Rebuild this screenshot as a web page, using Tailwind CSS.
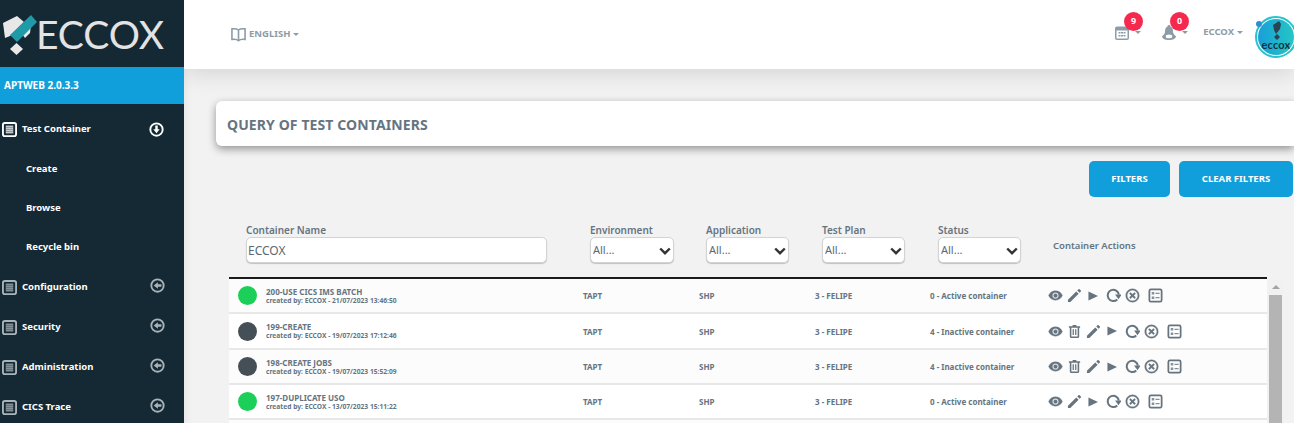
<!DOCTYPE html>
<html lang="en">
<head>
<meta charset="utf-8">
<title>ECCOX</title>
<script src="https://cdn.jsdelivr.net/npm/@tailwindcss/browser@4"></script>
</head>
<body class="w-[1294px] h-[423px] overflow-hidden bg-[#f2f2f2] font-['Noto_Sans',sans-serif]">
<svg class="hidden" xmlns="http://www.w3.org/2000/svg">
  <defs>
    <symbol id="eye" viewBox="0 0 24 24"><path fill="currentColor" stroke="currentColor" stroke-width=".6" d="M12,9A3,3 0 0,0 9,12A3,3 0 0,0 12,15A3,3 0 0,0 15,12A3,3 0 0,0 12,9M12,17A5,5 0 0,1 7,12A5,5 0 0,1 12,7A5,5 0 0,1 17,12A5,5 0 0,1 12,17M12,4.5C7,4.5 2.73,7.61 1,12C2.73,16.39 7,19.5 12,19.5C17,19.5 21.27,16.39 23,12C21.27,7.61 17,4.5 12,4.5Z"/></symbol>
    <symbol id="pencil" viewBox="0 0 24 24"><path fill="currentColor" d="M22.2,5.6C22.7,5.1 22.7,4.3 22.2,3.8L20.2,1.8C19.7,1.3 18.9,1.3 18.4,1.8L16.4,3.8L20.2,7.6M1.5,18.7V22.5H5.3L18.6,9.2L14.8,5.4L1.5,18.7Z"/></symbol>
    <symbol id="play" viewBox="0 0 24 24"><path fill="currentColor" d="M1,1V23L24,12Z"/></symbol>
    <symbol id="reload" viewBox="0 0 24 24"><path fill="none" stroke="currentColor" stroke-width="3.2" d="M18,18.3A9,9 0 1 1 20.6,10.5"/><path fill="currentColor" d="M14.5,10.5H25L20,18Z"/></symbol>
    <symbol id="cancel" viewBox="0 0 24 24"><path fill="currentColor" stroke="currentColor" stroke-width=".5" d="M12,20.5C7.3,20.5 3.5,16.7 3.5,12C3.5,7.3 7.3,3.5 12,3.5C16.7,3.5 20.5,7.3 20.5,12C20.5,16.7 16.7,20.5 12,20.5M12,1.2C6,1.2 1.2,6 1.2,12C1.2,18 6,22.8 12,22.8C18,22.8 22.8,18 22.8,12C22.8,6 18,1.2 12,1.2M15,7L12,10L9,7L7,9L10,12L7,15L9,17L12,14L15,17L17,15L14,12L17,9Z"/></symbol>
    <symbol id="listbox" viewBox="0 0 24 24"><rect x="2.2" y="2.2" width="19.6" height="19.6" rx="2.4" fill="none" stroke="currentColor" stroke-width="2.8"/><path fill="currentColor" opacity=".8" d="M6,6.5H10V10.5H6ZM12,7.5H18.5V9.5H12ZM6,13.5H10V17.5H6ZM12,14.5H18.5V16.5H12Z"/></symbol>
    <symbol id="trash" viewBox="0 0 24 24"><path fill="currentColor" d="M9,1.5V3.5H3V6H4.5V20A2.5,2.5 0 0,0 7,22.5H17A2.5,2.5 0 0,0 19.5,20V6H21V3.5H15V1.5H9M7,6H17V20H7V6M9,8.5V17.5H11V8.5H9M13,8.5V17.5H15V8.5H13Z"/></symbol>
    <symbol id="menu" viewBox="0 0 16 16"><rect x="1" y="1" width="14" height="14" rx="2" fill="none" stroke="currentColor" stroke-width="2"/><path fill="currentColor" opacity=".75" d="M4,3.8H12V12.2H4Z"/><path fill="#152935" opacity=".55" d="M4,5.6H12V6.2H4ZM4,7.7H12V8.3H4ZM4,9.8H12V10.4H4Z"/></symbol>
    <symbol id="adown" viewBox="0 0 16 16"><circle cx="8" cy="8" r="6.6" fill="none" stroke="currentColor" stroke-width="2"/><path fill="currentColor" d="M6.7,3.8H9.3V7.6H11.4L8,12L4.6,7.6H6.7Z"/></symbol>
    <symbol id="aleft" viewBox="0 0 16 16"><circle cx="8" cy="8" r="6.6" fill="none" stroke="currentColor" stroke-width="2"/><path fill="currentColor" d="M12.2,6.7V9.3H8.4V11.4L4,8L8.4,4.6V6.7Z"/></symbol>
    <symbol id="chev" viewBox="0 0 12 8"><path fill="none" stroke="currentColor" stroke-width="2.4" d="M1.2,1.5L6,6.2L10.8,1.5"/></symbol>
  </defs>
</svg>

<div class="flex h-[423px]">
  <!-- Sidebar -->
  <aside class="w-[184px] shrink-0 bg-[#152935] text-white">
    <div class="h-[67px] flex items-center pl-[3px]">
      <svg class="w-[34px] h-[43px] mt-[6px] shrink-0" viewBox="3 15 34 43">
        <path fill="#e8e8e8" d="M3,23L17,16L24,22L10,36L5,38Z"/>
        <path fill="#e8e8e8" d="M31,25L30,33L25,38L22,34Z"/>
        <path fill="#1f9aa8" d="M31,15L37,22L17,42L10,35Z"/>
        <path fill="#e8e8e8" d="M16.5,43L23,49L16.5,55L10,49Z"/>
      </svg>
      <span class="ml-[-1px] mt-[1px] font-['Lato',sans-serif] font-normal text-[39px] leading-none tracking-[-0.1px] text-[#e3e3e3]">ECCOX</span>
    </div>
    <div class="h-[37px] bg-[#119fdc] flex items-center pl-[4px] text-[10px] font-bold">APTWEB 2.0.3.3</div>
    <nav class="pt-[5px] text-[9.5px] font-bold">
      <div class="h-[40px] flex items-center pl-[2px] pr-[20px] gap-[5px]">
        <svg class="w-[15px] h-[15px]"><use href="#menu"/></svg>
        <span class="flex-1 pt-[1px]">Test Container</span>
        <svg class="w-[15px] h-[15px]"><use href="#adown"/></svg>
      </div>
      <div class="h-[39px] flex items-center pl-[26px] pt-[1px]">Create</div>
      <div class="h-[39px] flex items-center pl-[26px] pt-[1px]">Browse</div>
      <div class="h-[40px] flex items-center pl-[26px] pt-[1px]">Recycle bin</div>
      <div class="h-[40px] flex items-center pl-[2px] pr-[20px] gap-[5px]">
        <svg class="w-[15px] h-[15px] text-[#a9b4b9]"><use href="#menu"/></svg>
        <span class="flex-1 pt-[1px]">Configuration</span>
        <svg class="w-[15px] h-[15px] mt-[-4px] mr-[-1px] text-[#a9b4b9]"><use href="#aleft"/></svg>
      </div>
      <div class="h-[40px] flex items-center pl-[2px] pr-[20px] gap-[5px]">
        <svg class="w-[15px] h-[15px] text-[#a9b4b9]"><use href="#menu"/></svg>
        <span class="flex-1 pt-[1px]">Security</span>
        <svg class="w-[15px] h-[15px] mt-[-4px] mr-[-1px] text-[#a9b4b9]"><use href="#aleft"/></svg>
      </div>
      <div class="h-[40px] flex items-center pl-[2px] pr-[20px] gap-[5px]">
        <svg class="w-[15px] h-[15px] text-[#a9b4b9]"><use href="#menu"/></svg>
        <span class="flex-1 pt-[1px]">Administration</span>
        <svg class="w-[15px] h-[15px] mt-[-4px] mr-[-1px] text-[#a9b4b9]"><use href="#aleft"/></svg>
      </div>
      <div class="h-[40px] flex items-center pl-[2px] pr-[20px] gap-[5px]">
        <svg class="w-[15px] h-[15px] text-[#a9b4b9]"><use href="#menu"/></svg>
        <span class="flex-1 pt-[1px]">CICS Trace</span>
        <svg class="w-[15px] h-[15px] mt-[-4px] mr-[-1px] text-[#a9b4b9]"><use href="#aleft"/></svg>
      </div>
    </nav>
  </aside>

  <!-- Main -->
  <main class="flex-1 min-w-0 overflow-hidden bg-[#f2f2f2] shadow-[inset_10px_0_10px_-10px_rgba(0,0,0,0.08)]">
    <header class="h-[69px] bg-white shadow-[0_4px_25px_rgba(0,0,0,0.13)] flex items-center relative">
      <div class="flex items-center ml-[47px] text-[#8d9ca7]">
        <svg class="w-[15px] h-[15px]" viewBox="0 0 16 16"><path fill="none" stroke="currentColor" stroke-width="1.7" d="M8,3.2C6.5,2 3.5,1.6 1,2V13.2C3.5,12.8 6.5,13.2 8,14.5C9.5,13.2 12.5,12.8 15,13.2V2C12.5,1.6 9.5,2 8,3.2ZM8,3.2V14.5"/></svg>
        <span class="ml-[3px] text-[9.5px] font-bold">ENGLISH</span>
        <span class="ml-[3px] w-0 h-0 border-x-[3px] border-x-transparent border-t-[3px] border-t-[#8d9ca7]"></span>
      </div>
      <div class="ml-auto flex items-center mt-[-5px] text-[#8d9ca7]">
        <div class="relative flex items-center">
          <svg class="w-[14px] h-[15px]" viewBox="0 0 14 15"><path fill="currentColor" d="M2,1.5H12A2,2 0 0 1 14,3.5V13A2,2 0 0 1 12,15H2A2,2 0 0 1 0,13V3.5A2,2 0 0 1 2,1.5ZM1.5,5.5V13A.5,.5 0 0 0 2,13.5H12A.5,.5 0 0 0 12.5,13V5.5Z"/><path fill="currentColor" d="M3.5,7H5.5V8.5H3.5ZM6,7H8V8.5H6ZM8.5,7H10.5V8.5H8.5ZM3.5,10H5.5V11.5H3.5ZM6,10H8V11.5H6ZM8.5,10H10.5V11.5H8.5Z"/></svg>
          <span class="ml-[6px] w-0 h-0 border-x-[3px] border-x-transparent border-t-[3px] border-t-[#8d9ca7]"></span>
          <span class="absolute left-[9px] top-[-13px] w-[19px] h-[19px] rounded-full bg-[#f5294e] text-white text-[9px] font-bold flex items-center justify-center">9</span>
        </div>
        <div class="relative flex items-center ml-[21px]">
          <svg class="w-[14px] h-[15px]" viewBox="0 0 14 15"><path fill="currentColor" d="M7,0A1.4,1.4 0 0 1 8.4,1.6C10.5,2.4 11,4.5 11,6.5C11,8.5 12,9.8 14,11.2C14,13.5 11,15 7,15C3,15 0,13.5 0,11.2C2,9.8 3,8.5 3,6.5C3,4.5 3.5,2.4 5.6,1.6A1.4,1.4 0 0 1 7,0Z"/><ellipse cx="7" cy="11.4" rx="3.2" ry="1.9" fill="#fff"/></svg>
          <span class="ml-[6px] w-0 h-0 border-x-[3px] border-x-transparent border-t-[3px] border-t-[#8d9ca7]"></span>
          <span class="absolute left-[8px] top-[-13px] w-[19px] h-[19px] rounded-full bg-[#f5294e] text-white text-[9px] font-bold flex items-center justify-center">0</span>
        </div>
        <div class="flex items-center ml-[15px]">
          <span class="text-[9.5px] font-bold">ECCOX</span>
          <span class="ml-[3px] w-0 h-0 border-x-[3px] border-x-transparent border-t-[3px] border-t-[#8d9ca7]"></span>
        </div>
        <div class="relative ml-[12px] mr-[-3px] w-[42px] h-[42px] mt-[10px] rounded-full border-2 border-[#25c4cf] bg-white p-[1px]">
          <div class="w-full h-full rounded-full bg-gradient-to-r from-[#1a9fd8] to-[#26c6c4] flex flex-col items-center justify-end pb-[6px] overflow-hidden">
            <svg class="w-[11px] h-[19px]" viewBox="0 0 11 19"><path fill="#2a4552" d="M2,4L8,0L10,3L9,8L5,13L3,9ZM6,13L9,16L6,19L3,16Z"/></svg>
            <span class="font-['Lato',sans-serif] text-[11px] leading-[9px] font-bold text-[#17333f] tracking-[0.2px]">eccox</span>
          </div>
          <span class="absolute left-[-1px] top-[3px] w-[6px] h-[6px] rounded-full bg-[#2e8fd0]"></span>
        </div>
      </div>
    </header>

    <section class="ml-[32px] mt-[32px] h-[45px] bg-white rounded-l-[6px] shadow-[0_3px_8px_rgba(0,0,0,0.4)] flex items-center pl-[11px] pt-[1px]">
      <h1 class="text-[14px] font-bold text-[#66747f] tracking-[0.1px]">QUERY OF TEST CONTAINERS</h1>
    </section>

    <div class="flex justify-end gap-[9px] pr-[1px] mt-[15px]">
      <button class="w-[81px] h-[36px] rounded-[5px] bg-[#119fdc] text-white text-[9.5px] font-bold">FILTERS</button>
      <button class="w-[114px] h-[36px] rounded-[5px] bg-[#119fdc] text-white text-[9.5px] font-bold">CLEAR FILTERS</button>
    </div>

    <div class="flex items-start mt-[26px] pl-[62px] text-[10px] font-semibold text-[#66747f]">
      <label class="block w-[301px]"><span class="block leading-[14px]">Container Name</span>
        <input value="ECCOX" class="block w-full h-[26px] px-[1px] bg-white rounded-[5px] border border-[#d3d3d3] shadow-[0_1px_1px_rgba(0,0,0,0.2)] text-[12px] font-normal text-[#5b6873]"></label>
      <label class="block w-[84px] ml-[43px]"><span class="block leading-[14px]">Environment</span>
        <span class="relative block"><select class="block w-full h-[26px] px-[2px] appearance-none bg-white rounded-[5px] border border-[#d3d3d3] shadow-[0_1px_1px_rgba(0,0,0,0.2)] text-[11px] font-normal text-[#5b6873]"><option>All...</option></select><svg class="absolute right-[3px] top-[10px] w-[12px] h-[8px] text-[#333]"><use href="#chev"/></svg></span></label>
      <label class="block w-[83px] ml-[32px]"><span class="block leading-[14px]">Application</span>
        <span class="relative block"><select class="block w-full h-[26px] px-[2px] appearance-none bg-white rounded-[5px] border border-[#d3d3d3] shadow-[0_1px_1px_rgba(0,0,0,0.2)] text-[11px] font-normal text-[#5b6873]"><option>All...</option></select><svg class="absolute right-[3px] top-[10px] w-[12px] h-[8px] text-[#333]"><use href="#chev"/></svg></span></label>
      <label class="block w-[83px] ml-[33px]"><span class="block leading-[14px]">Test Plan</span>
        <span class="relative block"><select class="block w-full h-[26px] px-[2px] appearance-none bg-white rounded-[5px] border border-[#d3d3d3] shadow-[0_1px_1px_rgba(0,0,0,0.2)] text-[11px] font-normal text-[#5b6873]"><option>All...</option></select><svg class="absolute right-[3px] top-[10px] w-[12px] h-[8px] text-[#333]"><use href="#chev"/></svg></span></label>
      <label class="block w-[83px] ml-[33px]"><span class="block leading-[14px]">Status</span>
        <span class="relative block"><select class="block w-full h-[26px] px-[2px] appearance-none bg-white rounded-[5px] border border-[#d3d3d3] shadow-[0_1px_1px_rgba(0,0,0,0.2)] text-[11px] font-normal text-[#5b6873]"><option>All...</option></select><svg class="absolute right-[3px] top-[10px] w-[12px] h-[8px] text-[#333]"><use href="#chev"/></svg></span></label>
      <span class="ml-[32px] mt-[16px] leading-[14px] text-[9.5px]">Container Actions</span>
    </div>

    <div class="flex mt-[14px] ml-[45px]">
      <div class="w-[1038px] shrink-0 border-t-2 border-t-[#1a1a1a] text-[#66747f] text-[8px] font-bold">
        <div class="h-[35px] pl-[9px] flex items-center bg-[#fcfcfc] border-b-2 border-b-[#e8e8e8]">
          <span class="w-[19px] h-[19px] rounded-full bg-[#1bcf58]"></span>
          <div class="w-[317px] ml-[9px] mt-[-1px]"><div class="leading-[11px]">200-USE CICS IMS BATCH</div><div class="leading-[8px] text-[6.7px]">created by: ECCOX - 21/07/2023 13:46:50</div></div>
          <span class="w-[116px]">TAPT</span><span class="w-[116px]">SHP</span><span class="w-[115px]">3 - FELIPE</span><span class="w-[119px]">0 - Active container</span>
          <div class="flex items-center ml-[-1px] text-[#66747f]">
            <svg class="w-[15px] h-[15px]"><use href="#eye"/></svg>
            <svg class="w-[15px] h-[15px] ml-[4px]"><use href="#pencil"/></svg>
            <svg class="w-[10px] h-[10px] ml-[6px]"><use href="#play"/></svg>
            <svg class="w-[15px] h-[15px] ml-[8px]"><use href="#reload"/></svg>
            <svg class="w-[15px] h-[15px] ml-[4px]"><use href="#cancel"/></svg>
            <svg class="w-[15px] h-[15px] ml-[8px]"><use href="#listbox"/></svg>
          </div>
        </div>
        <div class="h-[36px] pl-[9px] flex items-center bg-white border-b-2 border-b-[#e8e8e8]">
          <span class="w-[19px] h-[19px] rounded-full bg-[#454f57]"></span>
          <div class="w-[317px] ml-[9px] mt-[-1px]"><div class="leading-[11px]">199-CREATE</div><div class="leading-[8px] text-[6.7px]">created by: ECCOX - 19/07/2023 17:12:46</div></div>
          <span class="w-[116px] pt-[1px]">TAPT</span><span class="w-[116px] pt-[1px]">SHP</span><span class="w-[115px] pt-[1px]">3 - FELIPE</span><span class="w-[119px] pt-[1px]">4 - Inactive container</span>
          <div class="flex items-center ml-[-1px] text-[#66747f]">
            <svg class="w-[15px] h-[15px]"><use href="#eye"/></svg>
            <svg class="w-[15px] h-[15px] ml-[4px]"><use href="#trash"/></svg>
            <svg class="w-[15px] h-[15px] ml-[4px]"><use href="#pencil"/></svg>
            <svg class="w-[10px] h-[10px] ml-[6px]"><use href="#play"/></svg>
            <svg class="w-[15px] h-[15px] ml-[8px]"><use href="#reload"/></svg>
            <svg class="w-[15px] h-[15px] ml-[4px]"><use href="#cancel"/></svg>
            <svg class="w-[15px] h-[15px] ml-[8px]"><use href="#listbox"/></svg>
          </div>
        </div>
        <div class="h-[35px] pl-[9px] flex items-center bg-[#fcfcfc] border-b-2 border-b-[#e8e8e8]">
          <span class="w-[19px] h-[19px] rounded-full bg-[#454f57]"></span>
          <div class="w-[317px] ml-[9px] mt-[-1px]"><div class="leading-[11px]">198-CREATE JOBS</div><div class="leading-[8px] text-[6.7px]">created by: ECCOX - 19/07/2023 15:52:09</div></div>
          <span class="w-[116px]">TAPT</span><span class="w-[116px]">SHP</span><span class="w-[115px]">3 - FELIPE</span><span class="w-[119px]">4 - Inactive container</span>
          <div class="flex items-center ml-[-1px] text-[#66747f]">
            <svg class="w-[15px] h-[15px]"><use href="#eye"/></svg>
            <svg class="w-[15px] h-[15px] ml-[4px]"><use href="#trash"/></svg>
            <svg class="w-[15px] h-[15px] ml-[4px]"><use href="#pencil"/></svg>
            <svg class="w-[10px] h-[10px] ml-[6px]"><use href="#play"/></svg>
            <svg class="w-[15px] h-[15px] ml-[8px]"><use href="#reload"/></svg>
            <svg class="w-[15px] h-[15px] ml-[4px]"><use href="#cancel"/></svg>
            <svg class="w-[15px] h-[15px] ml-[8px]"><use href="#listbox"/></svg>
          </div>
        </div>
        <div class="h-[35px] pl-[9px] flex items-center bg-white border-b-2 border-b-[#e8e8e8]">
          <span class="w-[19px] h-[19px] rounded-full bg-[#1bcf58]"></span>
          <div class="w-[317px] ml-[9px] mt-[-1px]"><div class="leading-[11px]">197-DUPLICATE USO</div><div class="leading-[8px] text-[6.7px]">created by: ECCOX - 13/07/2023 15:11:22</div></div>
          <span class="w-[116px] pt-[1px]">TAPT</span><span class="w-[116px] pt-[1px]">SHP</span><span class="w-[115px] pt-[1px]">3 - FELIPE</span><span class="w-[119px] pt-[1px]">0 - Active container</span>
          <div class="flex items-center ml-[-1px] text-[#66747f]">
            <svg class="w-[15px] h-[15px]"><use href="#eye"/></svg>
            <svg class="w-[15px] h-[15px] ml-[4px]"><use href="#pencil"/></svg>
            <svg class="w-[10px] h-[10px] ml-[6px]"><use href="#play"/></svg>
            <svg class="w-[15px] h-[15px] ml-[8px]"><use href="#reload"/></svg>
            <svg class="w-[15px] h-[15px] ml-[4px]"><use href="#cancel"/></svg>
            <svg class="w-[15px] h-[15px] ml-[8px]"><use href="#listbox"/></svg>
          </div>
        </div>
        <div class="h-[10px] bg-[#fcfcfc]"></div>
      </div>
      <div class="w-[16px] ml-[1px] mt-[2px] bg-[#f1f1f1] flex flex-col items-center">
        <span class="mt-[6px] w-0 h-0 border-x-[4px] border-x-transparent border-b-[4px] border-b-[#a3a3a3]"></span>
        <span class="mt-[6px] ml-[-2px] w-[13px] h-[140px] bg-[#b4b4b4]"></span>
      </div>
    </div>
  </main>
</div>
</body>
</html>
